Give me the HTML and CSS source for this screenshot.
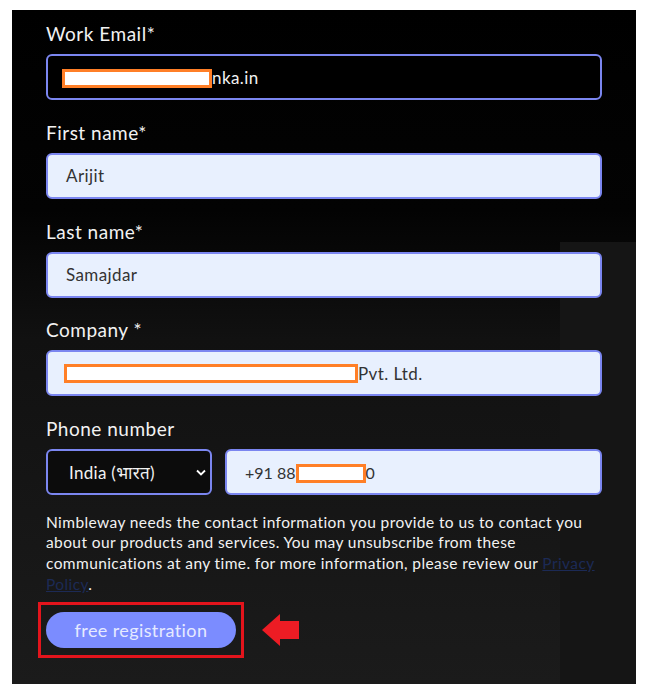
FILE: index.html
```html
<!DOCTYPE html>
<html lang="en">
<head>
    <meta charset="UTF-8">
    <meta name="viewport" content="width=device-width, initial-scale=1.0">
    <title>Free registration</title>
    <link rel="stylesheet" href="styles.css">
</head>
<body>
    <div class="panel">
        <div class="field">
            <div class="label">Work Email*</div>
            <div class="input input-dark">
                <span class="redact redact-email"></span><span>nka.in</span>
            </div>
        </div>
        <div class="field">
            <div class="label">First name*</div>
            <div class="input">Arijit</div>
        </div>
        <div class="field">
            <div class="label">Last name*</div>
            <div class="input">Samajdar</div>
        </div>
        <div class="field">
            <div class="label">Company *</div>
            <div class="input">
                <span class="redact redact-company"></span><span>Pvt. Ltd.</span>
            </div>
        </div>
        <div class="field field-phone">
            <div class="label">Phone number</div>
            <div class="phone-row">
                <div class="select-box">
                    <span>India (भारत)</span>
                    <svg class="chevron" width="10" height="7" viewBox="0 0 10 7">
                        <path d="M1 1.5 L5 5.5 L9 1.5" fill="none" stroke="#fff" stroke-width="1.8"/>
                    </svg>
                </div>
                <div class="input phone-input">
                    <span>+91 88</span><span class="redact redact-phone"></span><span>0</span>
                </div>
            </div>
        </div>
        <p class="notice">Nimbleway needs the contact information you provide to us to contact you about our products and services. You may unsubscribe from these communications at any time. for more information, please review our <a href="#">Privacy Policy</a>.</p>
        <div class="submit-row">
            <div class="highlight">
                <div class="button">free registration</div>
            </div>
            <svg class="arrow" width="38" height="32" viewBox="0 0 38 32">
                <path d="M0 16 L18 0 L18 7 L37 7 L37 25 L18 25 L18 32 Z" fill="#ed1c24"/>
            </svg>
        </div>
    </div>
</body>
</html>
```

FILE: styles.css
```css
body {
    margin: 0;
    background: #ffffff;
    font-family: Lato, "Noto Sans", sans-serif;
}
.panel {
    width: 590px;
    margin: 10px 0 0 12px;
    padding: 12px 0 26px 34px;
    background:
        linear-gradient(#151515, #151515) right 0 top 232px / 76px 100% no-repeat,
        linear-gradient(to bottom, #000000 0, #030303 200px, #111111 330px, #1b1b1b 100%);
}
.field {
    margin-bottom: 20.75px;
}
.field-phone {
    margin-bottom: 16.5px;
}
.label {
    color: #f2f2f2;
    font-size: 19px;
    letter-spacing: 0.5px;
    line-height: 24px;
    margin-bottom: 8px;
}
.input {
    box-sizing: border-box;
    width: 556px;
    height: 46px;
    padding: 0 18px;
    display: flex;
    align-items: center;
    background: #e8f0fe;
    border: 2px solid #7b86f0;
    border-radius: 6px;
    color: #333333;
    font-size: 17px;
    letter-spacing: 0.4px;
}
.input-dark {
    background: #000000;
    color: #f2f2f2;
    padding-left: 14px;
}
.redact {
    box-sizing: border-box;
    display: inline-block;
    height: 19px;
    background: #ffffff;
    border: 3px solid #ff7f27;
}
.redact-email {
    width: 150px;
    margin-top: 2px;
}
.redact-company {
    width: 294px;
    margin-left: -2px;
}
.redact-phone {
    width: 70px;
    margin-top: 2px;
}
.phone-row {
    display: flex;
    gap: 13px;
}
.select-box {
    box-sizing: border-box;
    width: 166px;
    height: 46px;
    padding: 0 4px 0 21px;
    display: flex;
    align-items: center;
    justify-content: space-between;
    background: #0c0c0c;
    border: 2px solid #7b86f0;
    border-radius: 6px;
    color: #f2f2f2;
    font-size: 17px;
    letter-spacing: 0.3px;
}
.phone-input {
    width: 377px;
    font-size: 16px;
    letter-spacing: 0;
}
.notice {
    width: 556px;
    margin: 0 0 8px;
    color: #f2f2f2;
    font-size: 15.5px;
    letter-spacing: 0.4px;
    line-height: 20.7px;
}
.notice a {
    color: #1c2a55;
}
.submit-row {
    display: flex;
    align-items: center;
    margin-left: -8px;
    gap: 18px;
}
.highlight {
    padding: 7px 5px;
    border: 3px solid #e3141c;
}
.button {
    width: 190px;
    height: 36px;
    border-radius: 18px;
    background: #7b8cff;
    color: #e6eaff;
    font-size: 18px;
    letter-spacing: 0.4px;
    line-height: 36px;
    text-align: center;
}
```
